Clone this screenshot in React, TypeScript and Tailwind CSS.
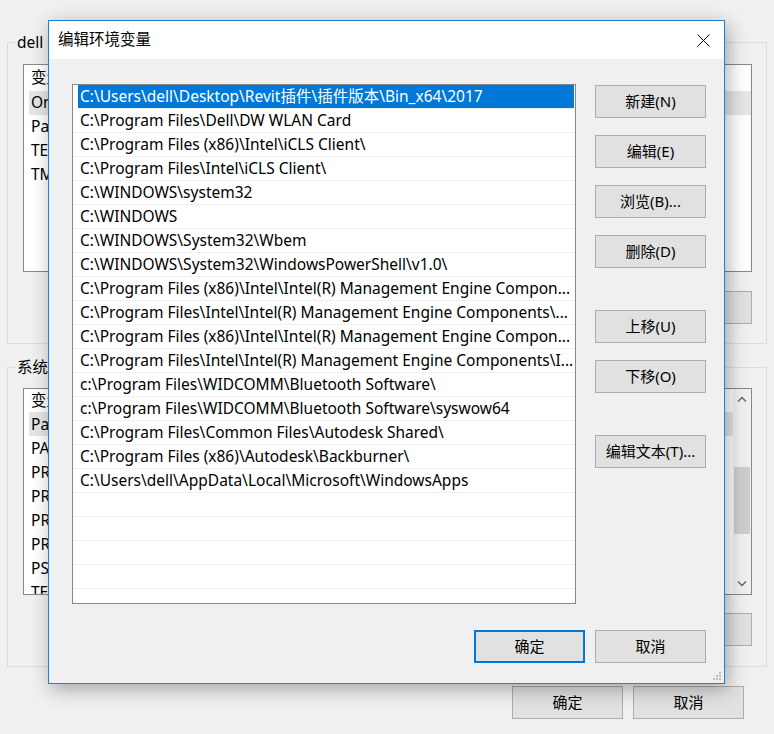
import { ReactNode } from 'react';

const paths = [
  'C:\\Users\\dell\\Desktop\\Revit插件\\插件版本\\Bin_x64\\2017',
  'C:\\Program Files\\Dell\\DW WLAN Card',
  'C:\\Program Files (x86)\\Intel\\iCLS Client\\',
  'C:\\Program Files\\Intel\\iCLS Client\\',
  'C:\\WINDOWS\\system32',
  'C:\\WINDOWS',
  'C:\\WINDOWS\\System32\\Wbem',
  'C:\\WINDOWS\\System32\\WindowsPowerShell\\v1.0\\',
  'C:\\Program Files (x86)\\Intel\\Intel(R) Management Engine Compon...',
  'C:\\Program Files\\Intel\\Intel(R) Management Engine Components\\...',
  'C:\\Program Files (x86)\\Intel\\Intel(R) Management Engine Compon...',
  'C:\\Program Files\\Intel\\Intel(R) Management Engine Components\\I...',
  'c:\\Program Files\\WIDCOMM\\Bluetooth Software\\',
  'c:\\Program Files\\WIDCOMM\\Bluetooth Software\\syswow64',
  'C:\\Program Files\\Common Files\\Autodesk Shared\\',
  'C:\\Program Files (x86)\\Autodesk\\Backburner\\',
  'C:\\Users\\dell\\AppData\\Local\\Microsoft\\WindowsApps',
];

const userVars = ['OneDrive', 'Path', 'TEMP', 'TMP'];
const sysVars = ['Path', 'PATHEXT', 'PROCESSOR_ARCHITECTURE', 'PROCESSOR_IDENTIFIER', 'PROCESSOR_LEVEL', 'PROCESSOR_REVISION', 'PSModulePath', 'TEMP'];

function WinButton({ children, primary = false, className = '' }: { children: ReactNode; primary?: boolean; className?: string }) {
  return (
    <button
      className={`w-[111px] h-[33px] bg-[#e1e1e1] text-[15px] text-black flex items-center justify-center ${
        primary ? 'border-2 border-[#0078d7]' : 'border border-[#adadad]'
      } ${className}`}
    >
      {children}
    </button>
  );
}

function VarList({ items, highlight, scroll = false, height }: { items: string[]; highlight: number; scroll?: boolean; height: string }) {
  return (
    <div className={`border border-[#828790] bg-white flex ${height} overflow-hidden`}>
      <div className="flex-1 flex flex-col pl-[5px]">
        <div className="h-[26px] flex items-center pl-[2px]">变量</div>
        {items.map((name, i) => (
          <div key={name + i} className={`h-6 shrink-0 flex items-center pl-[2px] ${i === highlight ? 'bg-[#e5e5e5]' : ''}`}>
            {name}
          </div>
        ))}
      </div>
      {scroll && (
        <div className="w-[18px] bg-[#f0f0f0] flex flex-col items-center">
          <div className="h-[20px] flex items-center justify-center text-[#606060]">
            <svg width="10" height="6" viewBox="0 0 10 6"><path d="M1 5.5 5 1.5 9 5.5" fill="none" stroke="#606060" strokeWidth="1.3" /></svg>
          </div>
          <div className="flex-1 w-full px-[1px] pt-[58px]">
            <div className="h-[67px] bg-[#cdcdcd]" />
          </div>
          <div className="h-[20px] flex items-center justify-center">
            <svg width="10" height="6" viewBox="0 0 10 6"><path d="M1 0.5 5 4.5 9 0.5" fill="none" stroke="#606060" strokeWidth="1.3" /></svg>
          </div>
        </div>
      )}
    </div>
  );
}

export default function App() {
  return (
    <div
      className="relative w-[774px] h-[734px] overflow-hidden bg-[#f0f0f0] text-[15.5px] text-black"
      style={{ fontFamily: '"Noto Sans", "Noto Sans CJK SC", sans-serif' }}
    >
      {/* Background window: 环境变量 */}
      <div className="px-[7px] pt-[32px]">
        <fieldset className="border border-[#dcdcdc] px-[15px] pr-[14px] pb-[19px] pt-[12px]">
          <legend className="-ml-[8px] px-[2px] leading-[20px]">dell 的用户变量(U)</legend>
          <VarList items={userVars} highlight={0} height="h-[208px]" />
          <div className="flex justify-end gap-[11px] mt-[19px]">
            <WinButton>新建(N)...</WinButton>
            <WinButton>编辑(E)...</WinButton>
            <WinButton>删除(D)</WinButton>
          </div>
        </fieldset>

        <fieldset className="mt-[13px] border border-[#dcdcdc] px-[15px] pr-[14px] pb-[20px] pt-[11px]">
          <legend className="-ml-[8px] px-[2px] leading-[20px]">系统变量(S)</legend>
          <VarList items={sysVars} highlight={0} scroll height="h-[207px]" />
          <div className="flex justify-end gap-[11px] mt-[18px]">
            <WinButton>新建(W)...</WinButton>
            <WinButton>编辑(I)...</WinButton>
            <WinButton>删除(L)</WinButton>
          </div>
        </fieldset>
      </div>

      <div className="flex justify-end gap-[10px] pr-[30px] mt-[19px]">
        <WinButton>确定</WinButton>
        <WinButton>取消</WinButton>
      </div>

      {/* Dialog: 编辑环境变量 */}
      <div className="absolute left-[48px] top-[20px] w-[677px] h-[664px] border border-[#1883d7] bg-[#f0f0f0] shadow-[3px_5px_18px_rgba(0,0,0,0.32)] flex flex-col">
        <div className="h-[38px] bg-white flex items-center justify-between pl-[9px] pr-[14px] shrink-0">
          <span>编辑环境变量</span>
          <svg width="13" height="13" viewBox="0 0 13 13">
            <path d="M0.5 0.5 12.5 12.5 M12.5 0.5 0.5 12.5" stroke="#000" strokeWidth="1" />
          </svg>
        </div>

        <div className="flex pl-[23px] pt-[25px] gap-[19px]">
          <div className="w-[504px] h-[520px] border border-[#828790] bg-white flex flex-col overflow-hidden">
            {paths.map((p, i) => (
              <div key={i} className="h-6 shrink-0 border-b border-[#f0f0f0] flex">
                <div
                  className={`ml-[5px] mr-[1px] flex-1 flex items-center pl-[2px] whitespace-nowrap overflow-hidden ${
                    i === 0 ? 'bg-[#0078d7] text-white' : ''
                  }`}
                >
                  {p}
                </div>
              </div>
            ))}
            {[0, 1, 2, 3, 4].map((k) => (
              <div key={'e' + k} className="h-6 shrink-0 border-b border-[#f0f0f0]" />
            ))}
          </div>

          <div className="flex flex-col pt-[1px]">
            <WinButton>新建(N)</WinButton>
            <WinButton className="mt-[17px]">编辑(E)</WinButton>
            <WinButton className="mt-[17px]">浏览(B)...</WinButton>
            <WinButton className="mt-[17px]">删除(D)</WinButton>
            <WinButton className="mt-[42px]">上移(U)</WinButton>
            <WinButton className="mt-[17px]">下移(O)</WinButton>
            <WinButton className="mt-[42px]">编辑文本(T)...</WinButton>
          </div>
        </div>

        <div className="flex justify-end gap-[10px] pr-[18px] mt-[26px]">
          <WinButton primary>确定</WinButton>
          <WinButton>取消</WinButton>
        </div>

        {/* resize grip */}
        <svg className="absolute right-[2px] bottom-[2px]" width="10" height="10" viewBox="0 0 10 10">
          <rect x="7" y="1" width="2" height="2" fill="#bcbcbc" />
          <rect x="4" y="4" width="2" height="2" fill="#bcbcbc" />
          <rect x="7" y="4" width="2" height="2" fill="#bcbcbc" />
          <rect x="1" y="7" width="2" height="2" fill="#bcbcbc" />
          <rect x="4" y="7" width="2" height="2" fill="#bcbcbc" />
          <rect x="7" y="7" width="2" height="2" fill="#bcbcbc" />
        </svg>
      </div>
    </div>
  );
}
